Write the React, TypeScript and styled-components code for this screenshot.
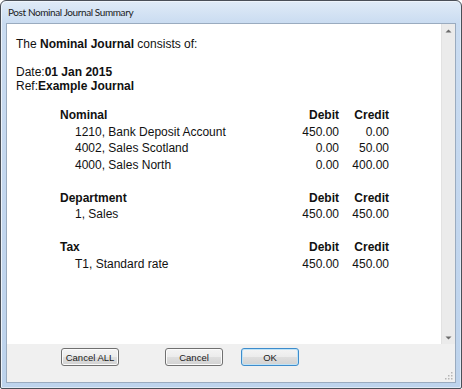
import React from 'react';
import styled, { createGlobalStyle } from 'styled-components';

const GlobalStyle = createGlobalStyle`
  html, body {
    margin: 0;
    padding: 0;
    background: #ffffff;
  }
  body {
    font-family: "Liberation Sans", Arial, sans-serif;
  }
`;

type Line = { label: string; debit: string; credit: string };
type Section = { title: string; lines: Line[] };

const sections: Section[] = [
  {
    title: 'Nominal',
    lines: [
      { label: '1210, Bank Deposit Account', debit: '450.00', credit: '0.00' },
      { label: '4002, Sales Scotland', debit: '0.00', credit: '50.00' },
      { label: '4000, Sales North', debit: '0.00', credit: '400.00' },
    ],
  },
  {
    title: 'Department',
    lines: [{ label: '1, Sales', debit: '450.00', credit: '450.00' }],
  },
  {
    title: 'Tax',
    lines: [{ label: 'T1, Standard rate', debit: '450.00', credit: '450.00' }],
  },
];

const Window = styled.div`
  position: relative;
  width: 462px;
  height: 389px;
  box-sizing: border-box;
  display: flex;
  flex-direction: column;
  padding: 0 5px 5px;
  border: 1px solid #4a4f57;
  border-radius: 6px 6px 2px 2px;
  background: linear-gradient(to bottom, #e0ebf7 0px, #cadcf1 22px, #c2d6ee 60%, #bdd3ec 100%);
  box-shadow: inset 1px 1px 0 #eef4fb, inset -1px -1px 0 #dfe9f5;
`;

const TitleBar = styled.div`
  height: 22px;
  display: flex;
  align-items: center;
  padding-left: 2px;
  font-family: Lato, "Liberation Sans", sans-serif;
  font-size: 10px;
  letter-spacing: -0.4px;
  color: #1b1b1b;
`;

const Client = styled.div`
  position: relative;
  flex: 1;
  display: flex;
  flex-direction: column;
  border: 1px solid #9aabbf;
  background: #f0f0f0;
`;

const Body = styled.div`
  flex: 1;
  display: flex;
  background: #ffffff;
`;

const Content = styled.div`
  flex: 1;
  padding: 13px 0 0 9px;
  font-size: 12px;
  color: #111111;
`;

const IntroLine = styled.div<{ $gapAfter?: boolean }>`
  line-height: 14px;
  height: 14px;
  margin-bottom: ${(p) => (p.$gapAfter ? '14px' : '0')};
  white-space: nowrap;
`;

const Table = styled.div`
  margin: 14px 0 0 44px;
  display: grid;
  grid-template-columns: 219px 60px 50px;
  grid-auto-rows: 16.5px;
  align-items: center;
`;

const Cell = styled.div<{ $bold?: boolean; $right?: boolean; $indent?: boolean }>`
  font-weight: ${(p) => (p.$bold ? 'bold' : 'normal')};
  text-align: ${(p) => (p.$right ? 'right' : 'left')};
  padding-left: ${(p) => (p.$indent ? '15px' : '0')};
  white-space: nowrap;
`;

const Spacer = styled.div`
  grid-column: 1 / -1;
`;

const Scrollbar = styled.div`
  width: 13px;
  display: flex;
  flex-direction: column;
  justify-content: space-between;
  align-items: center;
  padding: 5px 0 4px;
  background: #ebebeb;
  border-left: 1px solid #e2e2e2;
`;

const ButtonBar = styled.div`
  height: 38px;
  box-sizing: border-box;
  display: flex;
  align-items: flex-start;
  padding: 4px 0 0 54px;
  background: #f0f0f0;
`;

const Button = styled.button<{ $offset?: number; $default?: boolean }>`
  width: 58px;
  height: 18px;
  box-sizing: border-box;
  margin: 0 0 0 ${(p) => p.$offset ?? 0}px;
  padding: 0;
  border: 1px solid ${(p) => (p.$default ? '#3d8ccc' : '#707070')};
  border-radius: 3px;
  background: linear-gradient(to bottom, #f4f4f4 0%, #ececec 48%, #dedede 52%, #d2d2d2 100%);
  box-shadow: inset 0 0 0 1px ${(p) => (p.$default ? '#bfe3f7' : '#fbfbfb')};
  font-family: "Liberation Sans", Arial, sans-serif;
  font-size: 9.5px;
  color: #1a1a1a;
`;

const Grip = styled.svg`
  position: absolute;
  right: 2px;
  bottom: 2px;
`;

function Arrow({ up }: { up?: boolean }) {
  return (
    <svg width="7" height="4" viewBox="0 0 7 4">
      <path d={up ? 'M0.5 3.5 L3.5 0.5 L6.5 3.5 Z' : 'M0.5 0.5 L3.5 3.5 L6.5 0.5 Z'} fill="#6b6b6b" />
    </svg>
  );
}

export default function App() {
  return (
    <>
      <GlobalStyle />
      <Window>
        <TitleBar>Post Nominal Journal Summary</TitleBar>
        <Client>
          <Body>
            <Content>
              <IntroLine $gapAfter>
                The <b>Nominal Journal</b> consists of:
              </IntroLine>
              <IntroLine>
                Date:<b>01 Jan 2015</b>
              </IntroLine>
              <IntroLine>
                Ref:<b>Example Journal</b>
              </IntroLine>
              <Table>
                {sections.map((s, i) => (
                  <React.Fragment key={s.title}>
                    {i > 0 && <Spacer />}
                    <Cell $bold>{s.title}</Cell>
                    <Cell $bold $right>Debit</Cell>
                    <Cell $bold $right>Credit</Cell>
                    {s.lines.map((l) => (
                      <React.Fragment key={l.label}>
                        <Cell $indent>{l.label}</Cell>
                        <Cell $right>{l.debit}</Cell>
                        <Cell $right>{l.credit}</Cell>
                      </React.Fragment>
                    ))}
                  </React.Fragment>
                ))}
              </Table>
            </Content>
            <Scrollbar>
              <Arrow up />
              <Arrow />
            </Scrollbar>
          </Body>
          <ButtonBar>
            <Button>Cancel ALL</Button>
            <Button $offset={46}>Cancel</Button>
            <Button $offset={18} $default>OK</Button>
          </ButtonBar>
          <Grip width="9" height="9" viewBox="0 0 9 9">
            {[
              [7, 1],
              [4, 4],
              [7, 4],
              [1, 7],
              [4, 7],
              [7, 7],
            ].map(([x, y]) => (
              <rect key={`${x}-${y}`} x={x} y={y} width="1.5" height="1.5" fill="#b5b5b5" />
            ))}
          </Grip>
        </Client>
      </Window>
    </>
  );
}
